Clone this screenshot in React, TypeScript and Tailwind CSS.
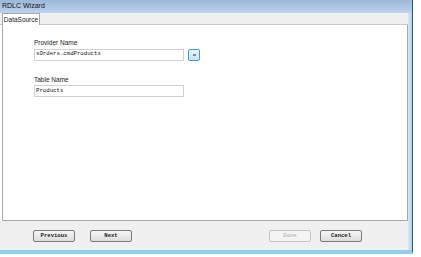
import React from "react";

const sans = { fontFamily: '"Liberation Sans", Arial, sans-serif' };
const mono = { fontFamily: '"Liberation Mono", "Courier New", monospace' };

function Btn({ label, disabled, w = "w-[42px]" }: { label: string; disabled?: boolean; w?: string }) {
  return (
    <div
      className={`${w} h-[12px] flex items-center justify-center rounded-[2px] border ${
        disabled
          ? "border-[#c4c4c4] bg-[#f4f4f4] text-[#a8a8a8] font-normal"
          : "border-[#7a7a7a] bg-gradient-to-b from-[#f6f6f6] to-[#dddddd] text-[#222] font-bold"
      } text-[5.6px] leading-none`}
      style={mono}
    >
      {label}
    </div>
  );
}

export default function App() {
  return (
    <div className="w-[421px] h-[257px] bg-white overflow-hidden">
      <div className="w-[413px] h-[254px] flex flex-col border-r border-r-[#2f5566] border-b-[4px] border-b-[#8fd0ee]">
        {/* title bar */}
        <div
          className="h-[13px] shrink-0 bg-gradient-to-b from-[#9db7d8] to-[#bcd3ee] flex items-center pl-[2px] text-[7px] text-[#111]"
          style={sans}
        >
          RDLC Wizard
        </div>
        <div className="flex flex-1 min-h-0">
          <div className="flex-1 flex flex-col min-w-0">
            {/* tab strip */}
            <div className="h-[12px] bg-[#f0f0f0] border-b border-[#c9c9c9] flex items-end pl-[2px]">
              <div
                className="h-[12px] w-[38px] bg-white border border-b-0 border-[#a9a9a9] flex items-center justify-center text-[6.5px] text-[#222] -mb-px"
                style={sans}
              >
                DataSource
              </div>
            </div>
            {/* content panel */}
            <div className="h-[196px] bg-white border-l border-r border-b border-[#a8a8a8] ml-[2px] flex flex-col pl-[31px] pt-[15px]">
              <div className="text-[6.5px] leading-none text-[#222] mb-[2px]" style={sans}>
                Provider Name
              </div>
              <div className="flex items-center gap-[4px]">
                <div
                  className="w-[150px] h-[12px] border border-[#d2d2d2] flex items-center pl-[1px] text-[5.7px] text-[#111]"
                  style={mono}
                >
                  sOrders.cmdProducts
                </div>
                <div className="w-[12px] h-[12px] rounded-[2px] border border-[#3c9ed8] bg-gradient-to-b from-[#eaf5fc] to-[#c9e3f5] flex items-center justify-center">
                  <div className="w-[3px] h-[2px] bg-[#8a8a8a]" />
                </div>
              </div>
              <div className="text-[6.5px] leading-none text-[#222] mt-[16px] mb-[2px]" style={sans}>
                Table Name
              </div>
              <div
                className="w-[150px] h-[12px] border border-[#d2d2d2] flex items-center pl-[1px] text-[5.7px] text-[#111]"
                style={mono}
              >
                Products
              </div>
            </div>
            {/* bottom bar */}
            <div className="flex-1 bg-[#f0f0f0] flex items-start pt-[9px]">
              <div className="ml-[33px]">
                <Btn label="Previous" />
              </div>
              <div className="ml-[15px]">
                <Btn label="Next" />
              </div>
              <div className="ml-[137px]">
                <Btn label="Done" disabled />
              </div>
              <div className="ml-[9px]">
                <Btn label="Cancel" />
              </div>
            </div>
          </div>
          {/* right frame */}
          <div className="w-[4px] bg-gradient-to-r from-[#dbe9f7] to-[#b4d0ec]" />
        </div>
      </div>
    </div>
  );
}
